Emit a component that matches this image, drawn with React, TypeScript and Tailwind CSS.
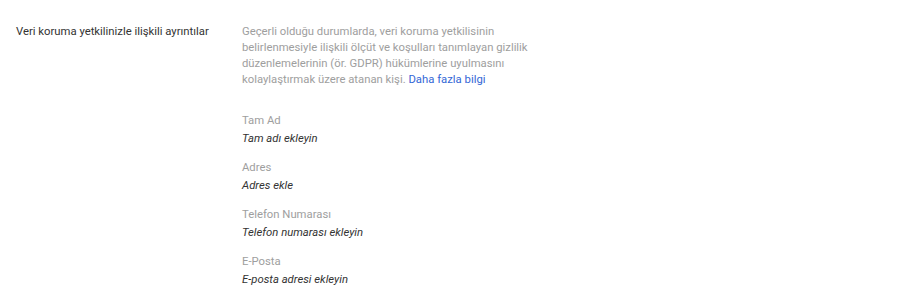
const fields = [
  { label: "Tam Ad", value: "Tam adı ekleyin" },
  { label: "Adres", value: "Adres ekle" },
  { label: "Telefon Numarası", value: "Telefon numarası ekleyin" },
  { label: "E-Posta", value: "E-posta adresi ekleyin" },
];

export default function App() {
  return (
    <div className="min-h-[307px] w-full bg-white font-['Roboto',sans-serif] text-[11.3px] leading-4">
      <div className="flex px-4 pt-6">
        <div className="w-[226px] shrink-0 text-[#333333]">
          Veri koruma yetkilinizle ilişkili ayrıntılar
        </div>
        <div className="w-[300px]">
          <p className="text-[#9e9e9e]">
            Geçerli olduğu durumlarda, veri koruma yetkilisinin belirlenmesiyle ilişkili ölçüt ve koşulları tanımlayan gizlilik düzenlemelerinin (ör. GDPR) hükümlerine uyulmasını kolaylaştırmak üzere atanan kişi.{" "}
            <a href="#" className="text-[#3367d6]">
              Daha fazla bilgi
            </a>
          </p>
          <div className="mt-[25px] flex flex-col gap-[13px]">
            {fields.map((f) => (
              <div key={f.label} className="flex flex-col gap-[2px]">
                <span className="text-[#9e9e9e]">{f.label}</span>
                <span className="italic text-[#333333]">{f.value}</span>
              </div>
            ))}
          </div>
        </div>
      </div>
    </div>
  );
}
